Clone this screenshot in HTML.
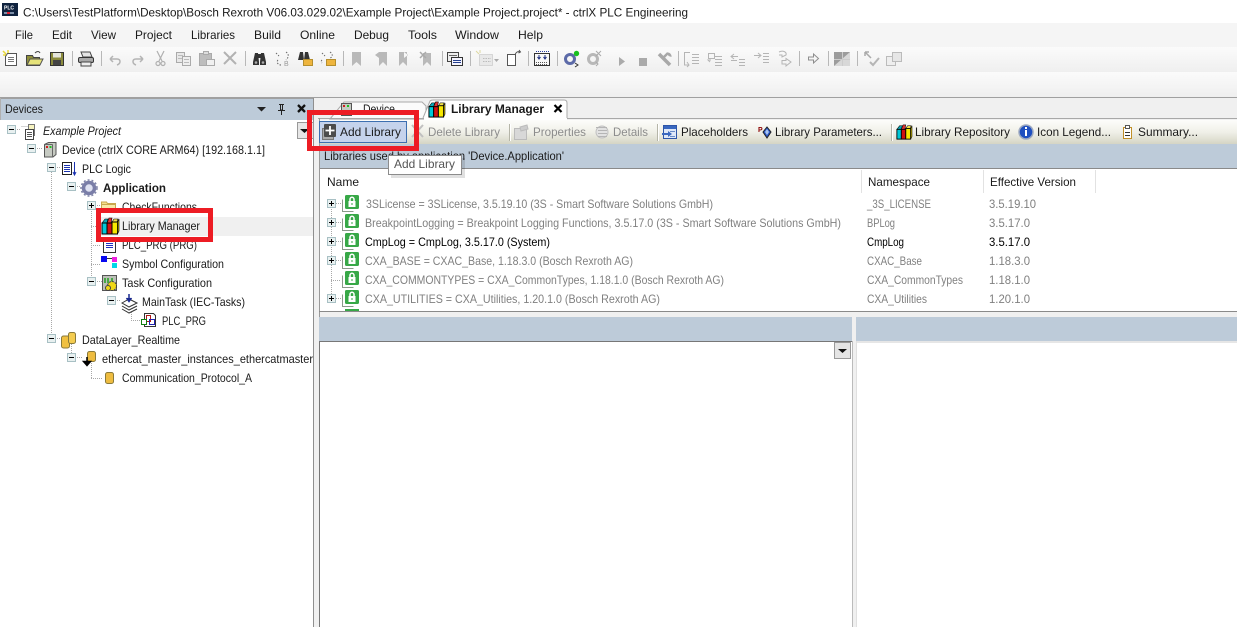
<!DOCTYPE html>
<html><head><meta charset="utf-8"><title>ctrlX PLC Engineering</title>
<style>
html,body{margin:0;padding:0;background:#fff;width:1237px;height:627px;overflow:hidden}
svg{display:block}
text{font-family:"Liberation Sans",sans-serif;font-size:12px;fill:#1a1a1a;white-space:pre}
.g{fill:#808080}.b{fill:#000}.d{fill:#8c8c8c}
</style></head><body>
<svg width="1237" height="627" viewBox="0 0 1237 627" xmlns="http://www.w3.org/2000/svg">
<defs>
<linearGradient id="tb" x1="0" y1="0" x2="0" y2="1"><stop offset="0" stop-color="#fbfbfb"/><stop offset="1" stop-color="#efefef"/></linearGradient>
<linearGradient id="lt" x1="0" y1="0" x2="0" y2="1"><stop offset="0" stop-color="#fdfdfb"/><stop offset=".5" stop-color="#f0f0e8"/><stop offset="1" stop-color="#d5d5c4"/></linearGradient>
<symbol id="minus" viewBox="0 0 9 9" overflow="visible"><rect x=".5" y=".5" width="8" height="8" fill="#e8f0f0" stroke="#a8c0c4"/><path d="M2 4.500h5" stroke="#000"/></symbol>
<symbol id="plus" viewBox="0 0 9 9" overflow="visible"><rect x=".5" y=".5" width="8" height="8" fill="#e8f0f0" stroke="#a8c0c4"/><path d="M2 4.500h5M4.500 2v5" stroke="#000"/></symbol>
<symbol id="books" viewBox="0 0 18 18" overflow="visible"><path d="M1 6l3-4h3L6 6z" fill="#08a8b8" stroke="#000" stroke-width=".6"/><rect x="1" y="6" width="5" height="11" fill="#00c8d8" stroke="#000"/><path d="M6 6l2-5h3l-1 5z" fill="#e03030" stroke="#000" stroke-width=".6"/><rect x="6" y="6" width="5" height="11" fill="#d01010" stroke="#000"/><path d="M11 5l2-3h4l-1 3z" fill="#f0e050" stroke="#000" stroke-width=".6"/><rect x="11" y="5" width="5.500" height="12" fill="#f8e800" stroke="#000"/><path d="M16.500 5l1.500-3v12l-1.500 3z" fill="#b8a800" stroke="#000" stroke-width=".6"/></symbol>
<symbol id="lock" viewBox="0 0 17 18" overflow="visible"><path d="M.5 4.500v12h11" fill="none" stroke="#8a9a8a"/><rect x="3" y="0" width="14" height="14" rx="1.500" fill="#37a847"/><rect x="6.500" y="6" width="7" height="6" fill="#fff"/><path d="M8 6.500V4.300a2 2 0 0 1 4 0V6.500" fill="none" stroke="#fff" stroke-width="1.500"/><rect x="9.500" y="8" width="1" height="2" fill="#37a847"/></symbol>
</defs>

<!-- chrome bands -->
<rect width="1237" height="627" fill="#fff"/>
<rect y="23" width="1237" height="24" fill="#f5f5f5"/>
<rect y="47" width="1237" height="25" fill="url(#tb)"/>
<rect y="72" width="1237" height="25" fill="url(#tb)"/>
<rect y="97" width="1237" height="1" fill="#a0a0a0"/>
<rect y="98" width="1237" height="529" fill="#f0f0f0"/>

<!-- title icon -->
<rect x="2" y="3" width="16" height="13" fill="#10233f"/>
<text x="4" y="9.500" style="font-size:5px;font-weight:bold;fill:#fff">PLC</text>
<rect x="4" y="12" width="10" height="2" fill="#7d8fa8"/>
<rect x="7" y="12" width="3" height="2" fill="#d23"/>
<text x="23" y="16.500" textLength="665" lengthAdjust="spacingAndGlyphs">C:\Users\TestPlatform\Desktop\Bosch Rexroth V06.03.029.02\Example Project\Example Project.project* - ctrlX PLC Engineering</text>

<!-- menu -->
<g>
<text x="15" y="39" textLength="18" lengthAdjust="spacingAndGlyphs">File</text>
<text x="52" y="39" textLength="20" lengthAdjust="spacingAndGlyphs">Edit</text>
<text x="91" y="39" textLength="25" lengthAdjust="spacingAndGlyphs">View</text>
<text x="135" y="39" textLength="37" lengthAdjust="spacingAndGlyphs">Project</text>
<text x="191" y="39" textLength="44" lengthAdjust="spacingAndGlyphs">Libraries</text>
<text x="254" y="39" textLength="27" lengthAdjust="spacingAndGlyphs">Build</text>
<text x="300" y="39" textLength="35" lengthAdjust="spacingAndGlyphs">Online</text>
<text x="354" y="39" textLength="35" lengthAdjust="spacingAndGlyphs">Debug</text>
<text x="408" y="39" textLength="29" lengthAdjust="spacingAndGlyphs">Tools</text>
<text x="455" y="39" textLength="44" lengthAdjust="spacingAndGlyphs">Window</text>
<text x="518" y="39" textLength="25" lengthAdjust="spacingAndGlyphs">Help</text>
</g>

<!-- main toolbar separators -->
<path d="M72.500 51v15M101.500 51v15M245.500 51v15M343.500 51v15M442.500 51v15M470.500 51v15M528.500 51v15M557.500 51v15M678.500 51v15M799.500 51v15M828.500 51v15M857.500 51v15" stroke="#b8b8b8"/>

<!-- main toolbar icons -->
<path d="M3 51l3 3M8 50v3M3 55h3" stroke="#e8d838" stroke-width="1.500"/>
<path d="M7.500 53.500h9v12h-11v-9z" fill="#fff" stroke="#555"/><path d="M8 57.500h6M8 59.500h6M8 61.500h6" stroke="#777"/>
<path d="M26.500 55.500h6l1 2h6v8h-13z" fill="#8f8f3a" stroke="#444"/><path d="M27 65l3-6h13l-3 6z" fill="#e6e37a" stroke="#555"/><path d="M35 53c2-2 4-2 5 0" fill="none" stroke="#444"/>
<rect x="50.500" y="52.500" width="13" height="13" fill="#8b8b3d" stroke="#333"/><rect x="53" y="53" width="8" height="4.500" fill="#e5e5dc"/><rect x="53" y="60" width="8" height="5" fill="#444"/>
<path d="M81 52h9l2 5H83z" fill="#e4e4e4" stroke="#444"/><rect x="78.500" y="57.500" width="15" height="5" rx="1.500" fill="#aaa" stroke="#333"/><rect x="81" y="62" width="10" height="4" fill="#eee" stroke="#444"/>
<path d="M110 59h7q3 0 3 2.500t-3 3.500M110 59l3-3M110 59l3 3" fill="none" stroke="#b4b4b4" stroke-width="1.500"/>
<path d="M143 59h-7q-3 0-3 2.500t3 3.500M143 59l-3-3M143 59l-3 3" fill="none" stroke="#b4b4b4" stroke-width="1.500"/>
<path d="M157 51l5 10M164 51l-5 10" stroke="#b0b0b0" stroke-width="1.200"/><circle cx="158" cy="63.500" r="2" fill="none" stroke="#b0b0b0" stroke-width="1.200"/><circle cx="163" cy="63.500" r="2" fill="none" stroke="#b0b0b0" stroke-width="1.200"/>
<path d="M176.500 52.500h8v10h-8z" fill="#e8e8e8" stroke="#aaa"/><path d="M182.500 56.500h8v9h-8z" fill="#eee" stroke="#aaa"/><path d="M178 55.500h5M178 58.500h4M184 59.500h5M184 62.500h5" stroke="#bbb"/>
<rect x="199.500" y="53.500" width="12" height="12" fill="#bdbdbd" stroke="#aaa"/><rect x="203.500" y="51.500" width="5" height="3" fill="#ddd" stroke="#aaa"/><rect x="206.500" y="59.500" width="8" height="6" fill="#f0f0f0" stroke="#aaa"/>
<path d="M224 52l12 12M236 52l-12 12" stroke="#b2b2b2" stroke-width="2"/>
<path d="M253 62l2-9h3l1 9v3h-6zM260 62l1-9h3l2 9v3h-6z" fill="#333"/><rect x="257" y="54" width="5" height="4" fill="#333"/><circle cx="256" cy="62.500" r="1.300" fill="#aaa"/><circle cx="263" cy="62.500" r="1.300" fill="#aaa"/>
<path d="M276 53l3 3M286 52c3 2 3 5 0 8M278 60c-2 2 0 5 3 5" fill="none" stroke="#666" stroke-dasharray="1.500 1.500"/><text x="284" y="66" style="font-size:7px;fill:#999">B</text>
<path d="M298 60l2-8h3l1 8zM304 60l1-8h3l2 8z" fill="#333"/><rect x="303.500" y="59.500" width="9" height="6" fill="#eeb53e" stroke="#b58f2e"/>
<path d="M322 53l3 3M330 52c3 2 3 5 0 6M322 60c-1 1-1 2 0 3" fill="none" stroke="#666" stroke-dasharray="1.500 1.500"/><rect x="326.500" y="59.500" width="9" height="6" fill="#eeb53e" stroke="#b58f2e"/>
<path d="M352 52h9v14l-4.500-4-4.500 4z" fill="#b9b9b9"/>
<path d="M379 52h8v14l-4-4-4 4zM375 55l4-3v6z" fill="#b9b9b9"/>
<path d="M399 52h8v14l-4-4-4 4zM408 55l-4-3v6z" fill="#b9b9b9"/>
<path d="M423 53h8v13l-4-4-4 4z" fill="#b9b9b9"/><path d="M420 52l6 6M426 52l-6 6" stroke="#aaa" stroke-width="1.500"/>
<rect x="447.500" y="52.500" width="11" height="9" fill="#eee" stroke="#444"/><rect x="451.500" y="57.500" width="11" height="8" fill="#f4f4ff" stroke="#333"/><path d="M453 60.500h8M453 62.500h8" stroke="#24408f"/><path d="M449 55.500h8" stroke="#666"/>
<path d="M476 51l3 3M480 50v3" stroke="#ddd8a0"/><rect x="479.500" y="54.500" width="13" height="11" fill="#e8e8e8" stroke="#bbb" stroke-dasharray="1 1"/><path d="M483 58.500h8M483 61.500h8" stroke="#bbb" stroke-dasharray="1.500 1"/><path d="M494 59h5l-2.500 3z" fill="#aaa"/>
<path d="M507.500 54.500h8v11h-8z" fill="#fff" stroke="#555"/><path d="M515 55c1-3 3-4 5-3M519 50l1.500 2-2 1" fill="none" stroke="#555"/>
<rect x="534.500" y="53.500" width="15" height="12" fill="#f8f8f8" stroke="#333"/><path d="M536 51.500h13" stroke="#2b3f9f" stroke-dasharray="1 1"/><path d="M539 55v3M545 55v3M537.500 57l1.500 2 1.500-2M543.500 57l1.500 2 1.500-2" fill="none" stroke="#1c2d80"/><path d="M536 62.500h12M536 64.500h12" stroke="#555" stroke-dasharray="1 1"/>
<circle cx="570" cy="59" r="4.500" fill="none" stroke="#5c6aa8" stroke-width="3"/><circle cx="576.500" cy="53.500" r="2.700" fill="#18c020"/><path d="M575 63l3 2-3 2" fill="none" stroke="#333"/>
<circle cx="593" cy="59" r="4.500" fill="none" stroke="#b8b8b8" stroke-width="3"/><path d="M596 51l5 5M601 51l-5 5" stroke="#aaa"/><path d="M596 62l2 2-2 2" fill="none" stroke="#aaa"/>
<path d="M619 57l6 4.500-6 4.500z" fill="#aaa"/><rect x="639" y="58" width="8" height="8" fill="#aaa"/>
<path d="M659 54l11 11" stroke="#a8a8a8" stroke-width="3.500"/><path d="M663 58l5-5" stroke="#a8a8a8" stroke-width="2.500"/><path d="M667 52.500a4 4 0 0 1 4.500 4.500l-3-1z" fill="#a8a8a8"/>
<path d="M690 52.500h-5.500v12.500h4M687 62l2 3-2 2M692 54.500h7M692 57.500h7M692 60.500h7M692 63.500h7" fill="none" stroke="#b5b5b5"/>
<path d="M708.500 53.500h6v5h-6zM715 56.500h7M715 59.500h7M715 62.500h7M715 65.500h7M711 60h-3l2 2" fill="none" stroke="#b5b5b5"/>
<path d="M731 56.500h7M734 54l-3 2.500 3 2.500M731 60.500h6M739 59.500h6M739 62.500h6M739 65.500h6" fill="none" stroke="#b5b5b5"/>
<path d="M754 55.500h6M758 53l3 2.500-3 2.500M763 53.500h6M763 56.500h6M763 59.500h6M763 62.500h6" fill="none" stroke="#b5b5b5"/>
<path d="M779 52c4-2 8 0 7 3l-4 2v-2h-3M782 60.500h4v-2l5 3.500-5 4v-2h-4z" fill="none" stroke="#b5b5b5"/>
<path d="M808.500 57h5v-3l5 4.500-5 4.500v-3h-5z" fill="none" stroke="#8e8e8e"/>
<path d="M834 52h16v14h-16z" fill="#9c9c9c"/><path d="M834 66l16-14v14z" fill="#d8d8d8"/><path d="M834 59.500h16M842.500 52v14" stroke="#ccc"/>
<path d="M865 52l6 6M865 52h4M865 52v4" fill="none" stroke="#aaa" stroke-width="1.500"/><path d="M870 62l3 3 6-7" fill="none" stroke="#b5b5b5" stroke-width="2"/>
<rect x="886.500" y="56.500" width="9" height="9" fill="#eee" stroke="#bbb"/><rect x="892.500" y="52.500" width="9" height="9" fill="#e6e6e6" stroke="#bbb"/>

<!-- LEFT PANEL -->
<rect x="0" y="98" width="313" height="529" fill="#fff"/>
<rect x="0" y="98" width="313" height="22" fill="#bdcbd9"/>
<rect x="0" y="98" width="314" height="1" fill="#a0a0a0"/>
<rect x="313" y="98" width="1" height="529" fill="#8f8f8f"/>
<rect x="0" y="98" width="1" height="22" fill="#b0b0b0"/>
<text x="5" y="113" textLength="38" lengthAdjust="spacingAndGlyphs">Devices</text>
<path d="M257 107h9l-4.500 4.500z" fill="#222"/>
<path d="M279 104.500h5M280.500 105v5h2v-5M278 110.500h7M281.500 111v4" fill="none" stroke="#222"/>
<path d="M298 105l7 7M305 105l-7 7" stroke="#111" stroke-width="2.300"/>
<rect x="297.500" y="122.500" width="16" height="16" fill="#e6e6e6" stroke="#999"/>
<path d="M300 129h9l-4.500 4z" fill="#111"/>

<!-- dotted tree lines -->
<g stroke="#a8a8a8" stroke-dasharray="1 1" fill="none">
<path d="M15 129.500h6M35 148.500h8M55 167.500h6M75 186.500h6"/>
<path d="M51.500 172v161M91.500 209v68M91 226.500h8M91 245.500h10M91 264.500h10M95 205.500h5M95 281.500h7"/>
<path d="M115 300.500h6M131.500 306v14M131 320.500h10"/>
<path d="M55 338.500h6M71.500 344v9M75 357.500h7M91.500 363v15M91 378.500h12"/>
</g>

<!-- highlight -->
<rect x="97" y="217" width="216" height="19" fill="#f0f0f0"/>

<!-- tree expanders -->
<use href="#minus" x="7" y="125" width="9" height="9"/>
<use href="#minus" x="27" y="144" width="9" height="9"/>
<use href="#minus" x="47" y="163" width="9" height="9"/>
<use href="#minus" x="67" y="182" width="9" height="9"/>
<use href="#plus" x="87" y="201" width="9" height="9"/>
<use href="#minus" x="87" y="277" width="9" height="9"/>
<use href="#minus" x="107" y="296" width="9" height="9"/>
<use href="#minus" x="47" y="334" width="9" height="9"/>
<use href="#minus" x="67" y="353" width="9" height="9"/>

<!-- tree icons -->
<path d="M21.500 126.500h8l4 3v10h-8" fill="none" stroke="#aaa" stroke-dasharray="1 1"/>
<path d="M28.500 124.500h6v11h-6z" fill="#f6f3c0" stroke="#777"/><rect x="25.500" y="129.500" width="8" height="10" fill="#fff" stroke="#444"/><path d="M27 132.500h5M27 134.500h5M27 136.500h5" stroke="#555"/>
<path d="M44.500 144.500l4-2h7.500v12l-3 2.500h-8.500z" fill="#c6cac2" stroke="#555"/><path d="M52.500 144.500v12.500M44.500 144.500h8" stroke="#666" fill="none"/><rect x="46" y="146" width="2" height="2" fill="#d02020"/><rect x="49.500" y="146" width="2" height="2" fill="#20c020"/>
<rect x="62.500" y="162.500" width="9" height="12" fill="#fff" stroke="#222"/><path d="M64 165.500h6M64 167.500h6M64 169.500h6M64 171.500h6" stroke="#1a32b0"/><path d="M74.500 162v13" stroke="#1a32b0"/><path d="M73 172l1.500 3 1.500-3" fill="none" stroke="#1a32b0"/>
<circle cx="89" cy="188" r="5.500" fill="#dfe2f2" stroke="#7a7ea8" stroke-width="3.500"/><circle cx="89" cy="188" r="8" fill="none" stroke="#8085a8" stroke-width="1.500" stroke-dasharray="2 2"/>
<path d="M101.500 207v-5h5l1 1.500h8v7" fill="#f6df8a" stroke="#c8a74e"/><rect x="101.500" y="204.500" width="14" height="8" fill="#f8e9a8" stroke="#c8a74e"/>
<use href="#books" x="101" y="217" width="18" height="18"/>
<rect x="103.500" y="238.500" width="12" height="14" fill="#fff" stroke="#333"/><path d="M106 243.500h7M106 245.500h7M106 247.500h7" stroke="#2030c0"/>
<rect x="101" y="256" width="6" height="6" fill="#0808f0"/><rect x="112" y="257" width="5" height="5" fill="#f020e0"/><rect x="112" y="263" width="5" height="5" fill="#00d8e8"/><path d="M107 258.500h5" stroke="#333"/>
<rect x="102.500" y="275.500" width="14" height="15" fill="#bcc0b8" stroke="#555"/><path d="M105 278v5M108 278v5M112 278v5" stroke="#20a020" stroke-width="1.500"/><circle cx="112" cy="286" r="4.500" fill="#f0d818" stroke="#444" stroke-dasharray="2 1"/><circle cx="108" cy="288" r="2.500" fill="#f0d818" stroke="#444"/>
<path d="M122 303l7-4 8 4-8 4zM122 306l7 4 8-4M122 309l7 4 8-4" fill="#fff" stroke="#333"/><path d="M129 294v7M126.500 298l2.500 3.500 2.500-3.500" fill="#1a2a90" stroke="#1a2a90" stroke-width="1.500"/>
<path d="M144.500 313.500h9l2 2v11h-11z" fill="#fff" stroke="#333"/><rect x="146.500" y="315.500" width="4" height="6" fill="none" stroke="#b01818"/><rect x="141.500" y="319.500" width="5" height="5" fill="#fff" stroke="#108010"/><rect x="149.500" y="319.500" width="5" height="5" fill="none" stroke="#2020b0"/>
<rect x="61.500" y="336" width="8" height="12" rx="2" fill="#f0c040" stroke="#8a7a3a"/><rect x="68.500" y="332.500" width="7" height="11" rx="2" fill="#f4cc50" stroke="#8a7a3a"/>
<rect x="87.500" y="351.500" width="8" height="10" rx="2" fill="#eebc40" stroke="#8a7a3a"/><path d="M87 357v5M83.500 361.500h7l-3.500 4z" fill="#000" stroke="#000" stroke-width="1.500"/>
<rect x="105.500" y="372.500" width="8" height="11" rx="2" fill="#eebc40" stroke="#8a7a3a"/>

<!-- tree text -->
<text x="43" y="135" font-style="italic" textLength="78" lengthAdjust="spacingAndGlyphs">Example Project</text>
<text x="62" y="154" textLength="203" lengthAdjust="spacingAndGlyphs">Device (ctrlX CORE ARM64) [192.168.1.1]</text>
<text x="82" y="173" textLength="49" lengthAdjust="spacingAndGlyphs">PLC Logic</text>
<text x="103" y="192" font-weight="bold" textLength="63" lengthAdjust="spacingAndGlyphs">Application</text>
<text x="122" y="211" textLength="75" lengthAdjust="spacingAndGlyphs">CheckFunctions</text>
<text x="122" y="230" textLength="78" lengthAdjust="spacingAndGlyphs">Library Manager</text>
<text x="122" y="249" textLength="75" lengthAdjust="spacingAndGlyphs">PLC_PRG (PRG)</text>
<text x="122" y="268" textLength="102" lengthAdjust="spacingAndGlyphs">Symbol Configuration</text>
<text x="122" y="287" textLength="90" lengthAdjust="spacingAndGlyphs">Task Configuration</text>
<text x="142" y="306" textLength="103" lengthAdjust="spacingAndGlyphs">MainTask (IEC-Tasks)</text>
<text x="162" y="325" textLength="44" lengthAdjust="spacingAndGlyphs">PLC_PRG</text>
<text x="82" y="344" textLength="98" lengthAdjust="spacingAndGlyphs">DataLayer_Realtime</text>
<text x="102" y="363" textLength="211" lengthAdjust="spacingAndGlyphs">ethercat_master_instances_ethercatmaster</text>
<text x="122" y="382" textLength="130" lengthAdjust="spacingAndGlyphs">Communication_Protocol_A</text>

<!-- RIGHT: tabs -->
<path d="M330 119l14-17h78l4 4v13z" fill="#fbfbfb" stroke="#aaa"/>
<rect x="341.500" y="103.500" width="10" height="12" fill="#c6cac2" stroke="#555"/><rect x="343" y="105" width="2" height="2" fill="#d02020"/><rect x="347" y="105" width="2" height="2" fill="#20c020"/>
<text x="363" y="113" textLength="32" lengthAdjust="spacingAndGlyphs">Device</text>
<path d="M423 118l7-17q1-1 3-1h131q3 0 3 3v15" fill="#fff" stroke="#aaa"/>
<use href="#books" x="428" y="101" width="17" height="17"/>
<text x="451" y="113" font-weight="bold" textLength="93" lengthAdjust="spacingAndGlyphs">Library Manager</text>
<path d="M554.500 105l7 7M561.500 105l-7 7" stroke="#000" stroke-width="2.200"/>
<rect x="318" y="118" width="919" height="1" fill="#a8a8a8"/>
<rect x="424" y="118" width="143" height="2" fill="#fff"/>

<!-- library toolbar -->
<rect x="319" y="120" width="918" height="24" fill="url(#lt)"/>
<path d="M319.500 118v510" stroke="#9a9a9a"/>
<rect x="319.500" y="121.500" width="87" height="21" fill="#c5d3ec" stroke="#3d6fb0"/>
<rect x="322.500" y="128.500" width="11" height="11" fill="#aaa" stroke="#777"/>
<rect x="324" y="124" width="12" height="13" rx="1" fill="#4c4c4c"/>
<path d="M330 126v9M325.500 130.500h9" stroke="#fff" stroke-width="1.800"/>
<text x="340" y="136" textLength="61" lengthAdjust="spacingAndGlyphs">Add Library</text>
<path d="M412 125l11 12M423 125l-11 12" stroke="#c0c0c0" stroke-width="2"/>
<text class="d" x="428" y="136" textLength="72" lengthAdjust="spacingAndGlyphs">Delete Library</text>
<path d="M509.500 124v17M891.500 124v17M657.500 124v17" stroke="#b5b5a8"/><path d="M510.500 124v17M892.500 124v17M658.500 124v17" stroke="#fff"/>
<rect x="514.500" y="128.500" width="12" height="11" fill="#d8d8d8" stroke="#bbb"/><path d="M520 127l7-2 1 4-7 2z" fill="#ccc" stroke="#bbb"/>
<text class="d" x="533" y="136" textLength="53" lengthAdjust="spacingAndGlyphs">Properties</text>
<circle cx="602" cy="132" r="6" fill="#e2e2e2" stroke="#c0c0c0"/><path d="M596 127.500h11M598 130.500h9M598 133.500h9M598 136.500h9" stroke="#b5b5b5"/>
<text class="d" x="613" y="136" textLength="35" lengthAdjust="spacingAndGlyphs">Details</text>
<rect x="663.500" y="125.500" width="13" height="13" fill="#dfe8f8" stroke="#2f56a8"/><rect x="664" y="126" width="12" height="3" fill="#3a68c0"/><path d="M662 134h8" stroke="#3a68c0" stroke-width="2"/><path d="M668 131l4 3-4 3z" fill="#3a68c0"/><path d="M670 131.500h5M670 136.500h5" stroke="#6a8cc8"/>
<text x="681" y="136" textLength="67" lengthAdjust="spacingAndGlyphs">Placeholders</text>
<text x="758" y="132" style="font-size:7px;font-weight:bold;fill:#8b0000">P</text>
<path d="M763 132l4-5 4 5-4 6z" fill="#2a58c8" stroke="#222"/><path d="M765 132l2-3 2 3-2 3z" fill="#a8c4f0"/>
<text x="775" y="136" textLength="107" lengthAdjust="spacingAndGlyphs">Library Parameters...</text>
<use href="#books" x="896" y="124" width="16" height="16"/>
<text x="915" y="136" textLength="95" lengthAdjust="spacingAndGlyphs">Library Repository</text>
<circle cx="1026" cy="132" r="7" fill="#1e4fc0" stroke="#9da9c0" stroke-width="1.500"/>
<rect x="1025" y="127" width="2" height="2" fill="#fff"/><rect x="1025" y="130" width="2" height="6" fill="#fff"/>
<text x="1037" y="136" textLength="74" lengthAdjust="spacingAndGlyphs">Icon Legend...</text>
<rect x="1123.500" y="127.500" width="8" height="11" fill="#fff" stroke="#c08f28"/><rect x="1125.500" y="125.500" width="4" height="3" fill="#fff" stroke="#555"/><path d="M1125 132.500h5M1125 135.500h5" stroke="#333"/>
<text x="1138" y="136" textLength="60" lengthAdjust="spacingAndGlyphs">Summary...</text>

<!-- blue header -->
<rect x="320" y="144" width="917" height="24" fill="#bdcbd9"/>
<text x="324" y="160" textLength="240" lengthAdjust="spacingAndGlyphs">Libraries used by application 'Device.Application'</text>
<rect x="320" y="168" width="917" height="1" fill="#8a8a8a"/>

<!-- table -->
<rect x="320" y="169" width="917" height="142" fill="#fff"/>
<text x="327" y="186" textLength="32" lengthAdjust="spacingAndGlyphs">Name</text>
<text x="868" y="186" textLength="62" lengthAdjust="spacingAndGlyphs">Namespace</text>
<text x="990" y="186" textLength="86" lengthAdjust="spacingAndGlyphs">Effective Version</text>
<path d="M861.500 170v23M983.500 170v23M1095.500 170v23" stroke="#e2e2e2"/>
<path d="M331.500 209v90M331 280.500h10" stroke="#a8a8a8" stroke-dasharray="1 1"/>
<path d="M336 203.500h5M336 222.500h5M336 241.500h5M336 260.500h5M336 298.500h5" stroke="#a8a8a8" stroke-dasharray="1 1"/>
<use href="#plus" x="327" y="199" width="9" height="9"/>
<use href="#plus" x="327" y="218" width="9" height="9"/>
<use href="#plus" x="327" y="237" width="9" height="9"/>
<use href="#plus" x="327" y="256" width="9" height="9"/>
<use href="#plus" x="327" y="294" width="9" height="9"/>
<use href="#lock" x="342" y="195" width="17" height="18"/>
<use href="#lock" x="342" y="214" width="17" height="18"/>
<use href="#lock" x="342" y="233" width="17" height="18"/>
<use href="#lock" x="342" y="252" width="17" height="18"/>
<use href="#lock" x="342" y="271" width="17" height="18"/>
<use href="#lock" x="342" y="290" width="17" height="18"/>
<rect x="345" y="309" width="14" height="2" fill="#37a847"/>

<text class="g" x="366" y="208" textLength="347" lengthAdjust="spacingAndGlyphs">3SLicense = 3SLicense, 3.5.19.10 (3S - Smart Software Solutions GmbH)</text>
<text class="g" x="365" y="227" textLength="476" lengthAdjust="spacingAndGlyphs">BreakpointLogging = Breakpoint Logging Functions, 3.5.17.0 (3S - Smart Software Solutions GmbH)</text>
<text class="b" x="365" y="246" textLength="185" lengthAdjust="spacingAndGlyphs">CmpLog = CmpLog, 3.5.17.0 (System)</text>
<text class="g" x="365" y="265" textLength="268" lengthAdjust="spacingAndGlyphs">CXA_BASE = CXAC_Base, 1.18.3.0 (Bosch Rexroth AG)</text>
<text class="g" x="365" y="284" textLength="359" lengthAdjust="spacingAndGlyphs">CXA_COMMONTYPES = CXA_CommonTypes, 1.18.1.0 (Bosch Rexroth AG)</text>
<text class="g" x="365" y="303" textLength="295" lengthAdjust="spacingAndGlyphs">CXA_UTILITIES = CXA_Utilities, 1.20.1.0 (Bosch Rexroth AG)</text>

<text class="g" x="867" y="208" textLength="64" lengthAdjust="spacingAndGlyphs">_3S_LICENSE</text>
<text class="g" x="867" y="227" textLength="28" lengthAdjust="spacingAndGlyphs">BPLog</text>
<text class="b" x="867" y="246" textLength="37" lengthAdjust="spacingAndGlyphs">CmpLog</text>
<text class="g" x="867" y="265" textLength="55" lengthAdjust="spacingAndGlyphs">CXAC_Base</text>
<text class="g" x="867" y="284" textLength="96" lengthAdjust="spacingAndGlyphs">CXA_CommonTypes</text>
<text class="g" x="867" y="303" textLength="60" lengthAdjust="spacingAndGlyphs">CXA_Utilities</text>

<text class="g" x="989" y="208" textLength="47" lengthAdjust="spacingAndGlyphs">3.5.19.10</text>
<text class="g" x="989" y="227" textLength="41" lengthAdjust="spacingAndGlyphs">3.5.17.0</text>
<text class="b" x="989" y="246" textLength="41" lengthAdjust="spacingAndGlyphs">3.5.17.0</text>
<text class="g" x="989" y="265" textLength="41" lengthAdjust="spacingAndGlyphs">1.18.3.0</text>
<text class="g" x="989" y="284" textLength="41" lengthAdjust="spacingAndGlyphs">1.18.1.0</text>
<text class="g" x="989" y="303" textLength="41" lengthAdjust="spacingAndGlyphs">1.20.1.0</text>

<rect x="319" y="311" width="918" height="1" fill="#8a8a8a"/>

<!-- lower panes -->
<rect x="319" y="317" width="533" height="24" fill="#bdcbd9"/>
<rect x="856" y="317" width="381" height="24" fill="#bdcbd9"/>
<rect x="320" y="341" width="532" height="286" fill="#fff"/>
<rect x="319" y="341" width="533" height="1" fill="#777"/>
<rect x="319" y="341" width="1" height="286" fill="#777"/>
<rect x="852" y="341" width="1" height="286" fill="#bbb"/>
<rect x="856" y="341" width="381" height="286" fill="#fff"/>
<rect x="856" y="341" width="381" height="2" fill="#e6e6e6"/>
<rect x="856" y="341" width="1" height="286" fill="#e0e0e0"/>
<rect x="834.500" y="342.500" width="16" height="16" fill="#e4e4e4" stroke="#999"/>
<path d="M838 349h9l-4.500 4z" fill="#111"/>

<!-- tooltip -->
<rect x="391" y="158" width="74" height="20" fill="#000" opacity=".12"/>
<rect x="388.500" y="155.500" width="73" height="19" fill="#fff" stroke="#8c8c8c"/>
<text x="394" y="168" style="fill:#555" textLength="61" lengthAdjust="spacingAndGlyphs">Add Library</text>

<!-- red annotation boxes -->
<rect x="98.500" y="210.500" width="112" height="29" fill="none" stroke="#ed1c24" stroke-width="5"/>
<rect x="309.500" y="112.500" width="107" height="36" fill="none" stroke="#ed1c24" stroke-width="5"/>
</svg>
</body></html>
